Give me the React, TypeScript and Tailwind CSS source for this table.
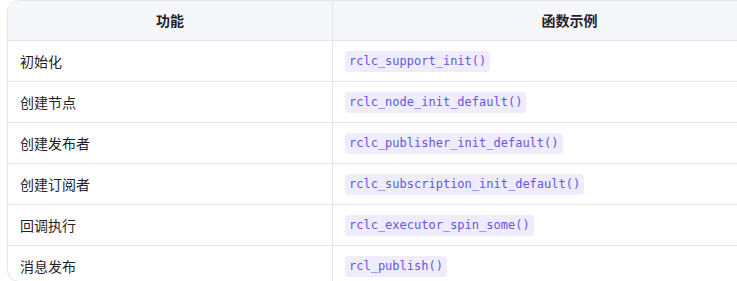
import React from "react";

const rows: [string, string][] = [
  ["初始化", "rclc_support_init()"],
  ["创建节点", "rclc_node_init_default()"],
  ["创建发布者", "rclc_publisher_init_default()"],
  ["创建订阅者", "rclc_subscription_init_default()"],
  ["回调执行", "rclc_executor_spin_some()"],
  ["消息发布", "rcl_publish()"],
];

export default function App() {
  return (
    <div
      className="w-[737px] h-[281px] bg-white pl-[7px] overflow-hidden"
      style={{ fontFamily: '"Noto Sans CJK SC", "Noto Sans", sans-serif' }}
    >
      <div className="w-[800px] h-[282px] border border-[#e4e4ea] rounded-[12px] overflow-hidden">
        <div className="grid grid-cols-[325px_1fr] h-[40px] bg-[#f6f7fb] border-b border-[#e4e4ea]">
          <div className="flex items-center justify-center border-r border-[#e4e4ea] text-[14px] font-bold text-[#1f2329]">
            功能
          </div>
          <div className="flex items-center justify-center text-[14px] font-bold text-[#1f2329]">
            函数示例
          </div>
        </div>
        {rows.map(([a, b]) => (
          <div
            key={a}
            className="grid grid-cols-[325px_1fr] h-[41px] border-b border-[#e4e4ea]"
          >
            <div className="flex items-center pl-[12px] border-r border-[#e4e4ea] text-[14px] text-[#1f2329]">
              {a}
            </div>
            <div className="flex items-center pl-[12px]">
              <span
                className="h-[21px] px-[4px] flex items-center rounded-[4px] bg-[#efedfd] text-[#6355e6] text-[12px]"
                style={{ fontFamily: '"DejaVu Sans Mono", "Liberation Mono", monospace' }}
              >
                {b}
              </span>
            </div>
          </div>
        ))}
      </div>
    </div>
  );
}
